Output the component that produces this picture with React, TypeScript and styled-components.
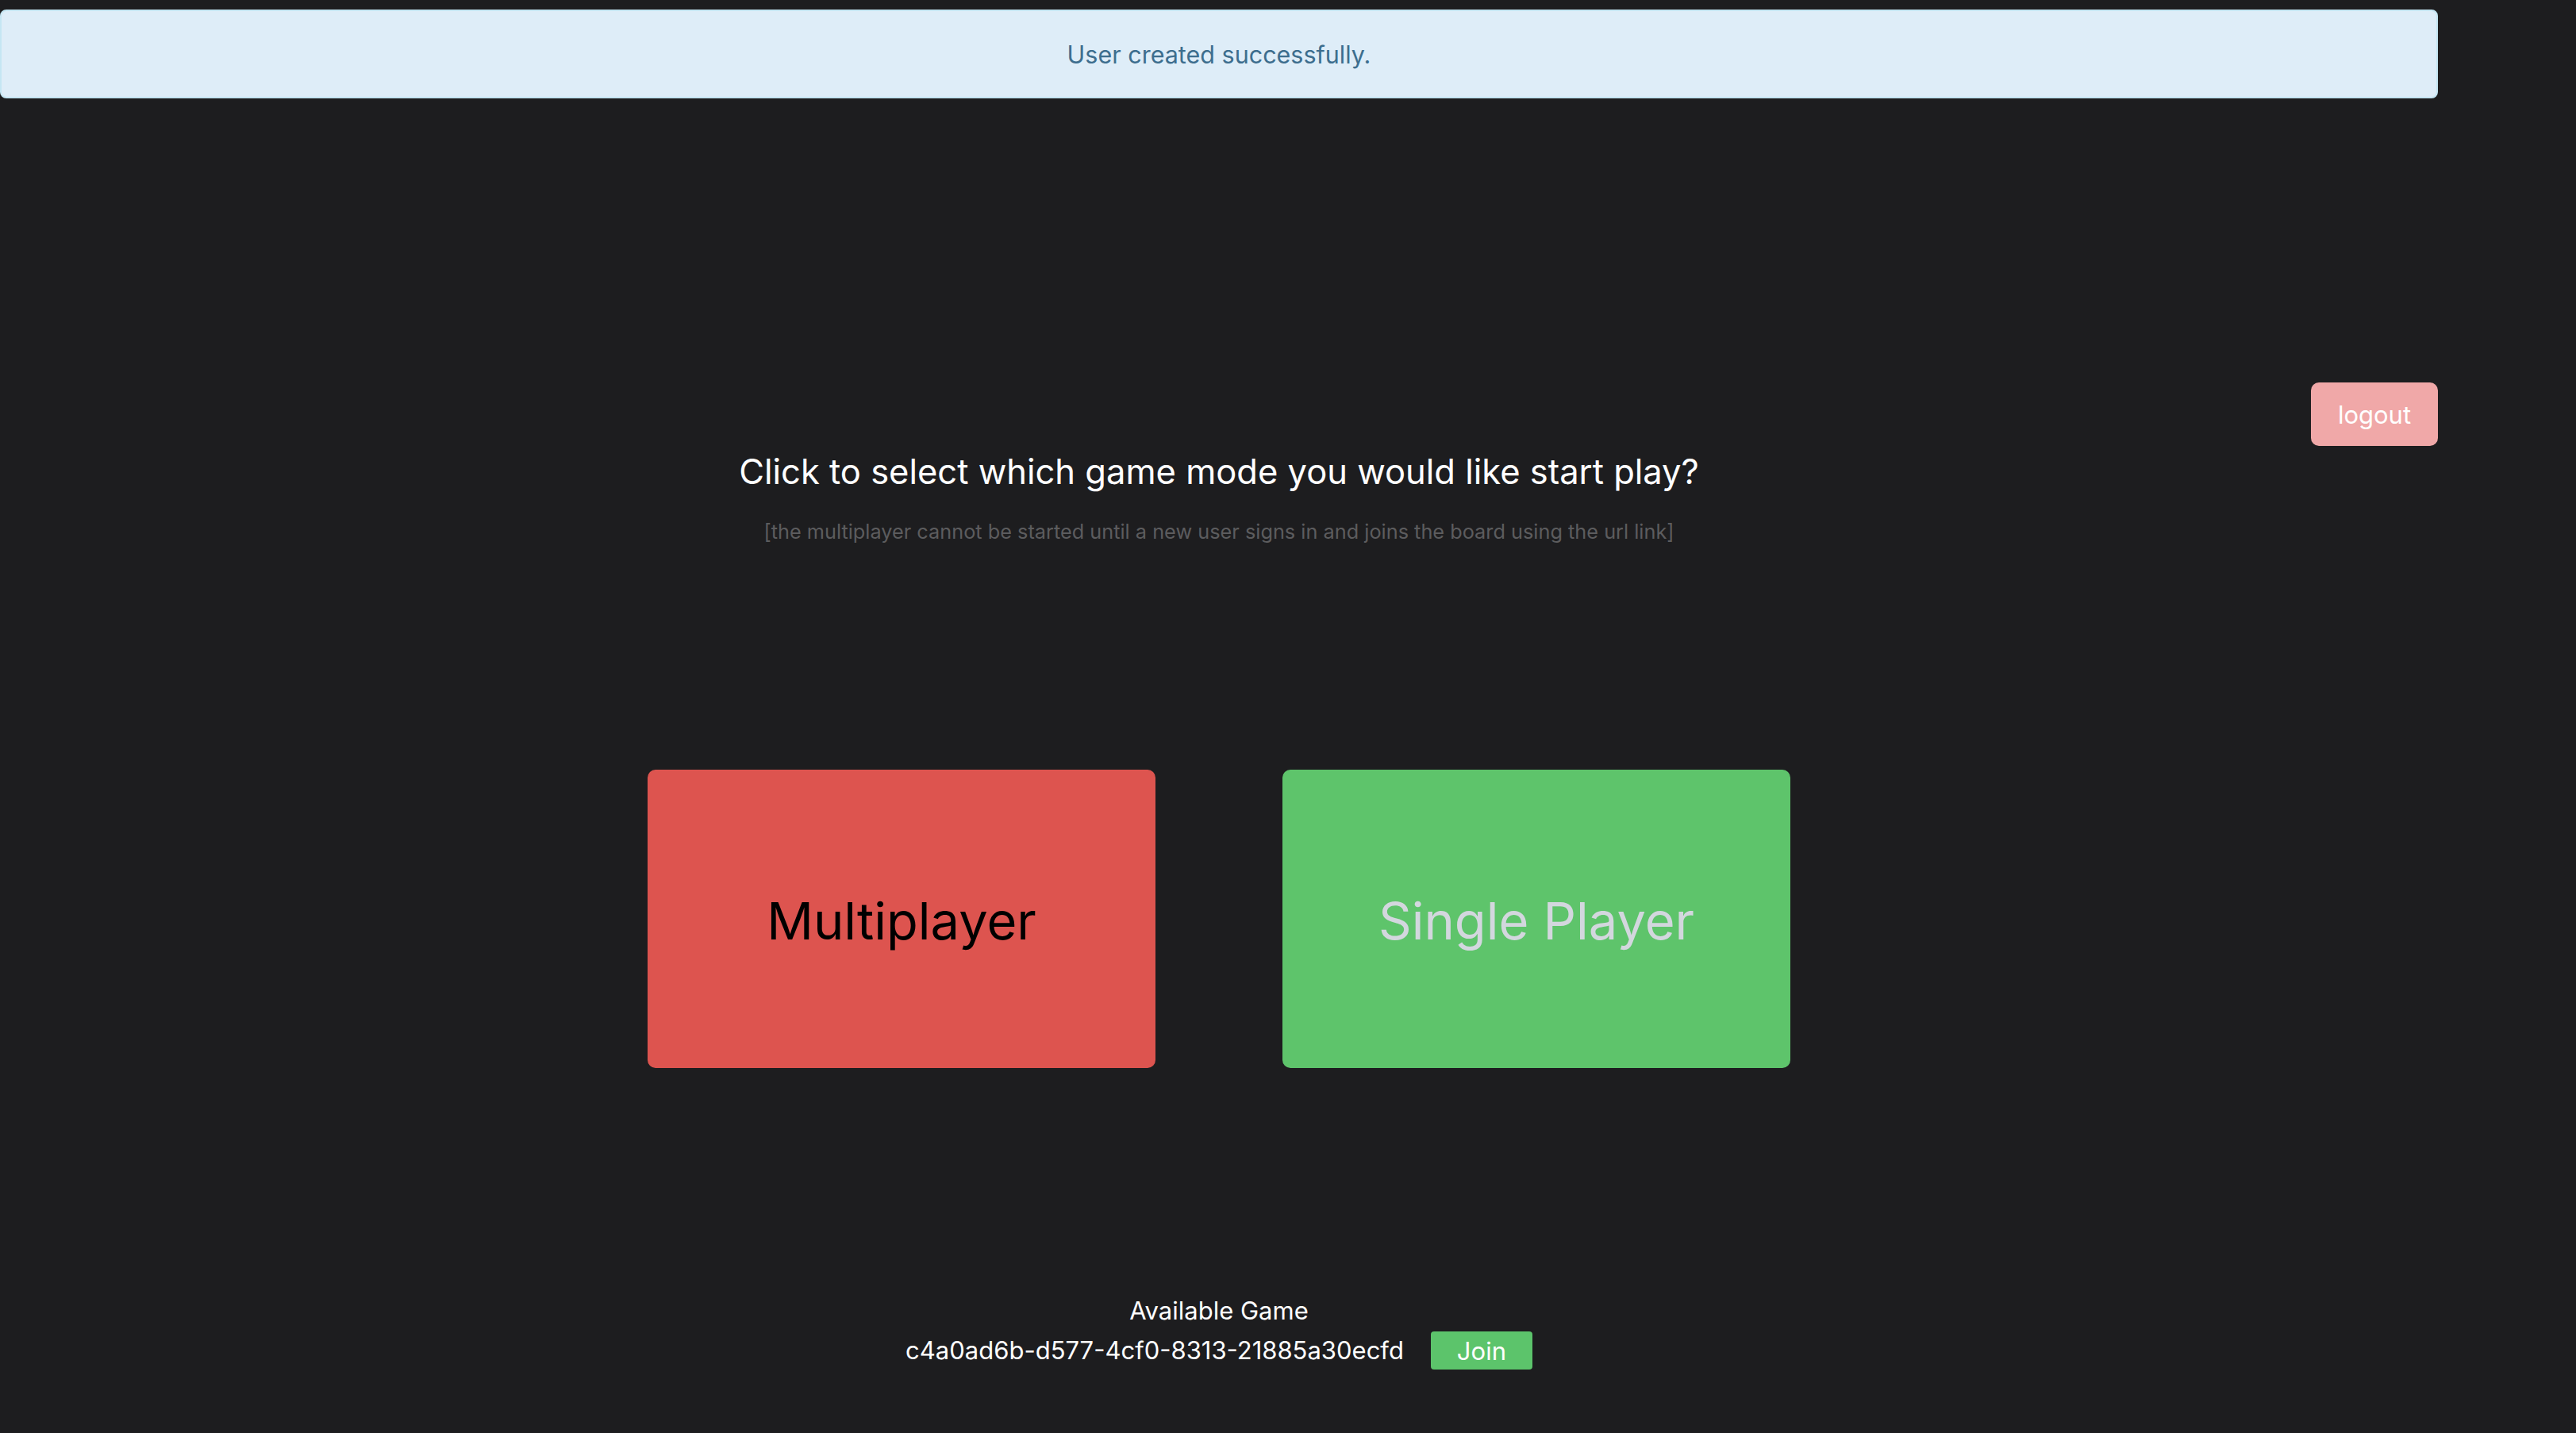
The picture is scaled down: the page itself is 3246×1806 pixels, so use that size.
import React from "react";
import styled, { createGlobalStyle } from "styled-components";

const GlobalStyle = createGlobalStyle`
  html, body {
    margin: 0;
    padding: 0;
    background: #1d1d1f;
    font-family: Inter, "Noto Sans", "Liberation Sans", sans-serif;
  }
  body { min-height: 1806px; }
`;

const Page = styled.div`
  width: 3072px;
  padding-top: 12px;
  display: flex;
  flex-direction: column;
  align-items: stretch;
`;

const Alert = styled.div`
  box-sizing: border-box;
  height: 112px;
  border: 2px solid #c5e6f3;
  border-radius: 8px;
  background: #deedf8;
  color: #3d6e8e;
  font-size: 30.5px;
  display: flex;
  align-items: center;
  justify-content: center;
`;

const TopBar = styled.div`
  display: flex;
  justify-content: flex-end;
  margin-top: 358px;
`;

const LogoutButton = styled.button`
  width: 160px;
  height: 80px;
  border: none;
  border-radius: 10px;
  background: #f0a8a8;
  color: #ffffff;
  font-family: inherit;
  font-size: 31px;
  cursor: pointer;
`;

const Heading = styled.h1`
  margin: 2px 0 0;
  text-align: center;
  font-size: 43.5px;
  font-weight: 400;
  line-height: 60px;
  color: #ffffff;
`;

const Note = styled.p`
  margin: 30px 0 0;
  text-align: center;
  font-size: 25.3px;
  line-height: 32px;
  color: #5c5c5e;
`;

const Modes = styled.div`
  display: flex;
  justify-content: center;
  gap: 160px;
  margin-top: 284px;
`;

const ModeCard = styled.button<{ $bg: string; $fg: string }>`
  width: 640px;
  height: 376px;
  border: none;
  border-radius: 10px;
  background: ${(p) => p.$bg};
  color: ${(p) => p.$fg};
  font-family: inherit;
  font-size: 65px;
  font-weight: 400;
  display: flex;
  align-items: center;
  justify-content: center;
  padding-top: 6px;
  cursor: pointer;
`;

const Available = styled.div`
  margin-top: 286px;
  display: flex;
  flex-direction: column;
  align-items: center;
  color: #ffffff;
  font-size: 31px;
`;

const AvailableTitle = styled.div`
  line-height: 40px;
`;

const GameRow = styled.div`
  display: flex;
  align-items: center;
  gap: 34px;
  margin-top: 6px;
`;

const GameId = styled.span`
  line-height: 48px;
`;

const JoinButton = styled.button`
  width: 128px;
  height: 48px;
  border: none;
  border-radius: 4px;
  background: #5cc46b;
  color: #ffffff;
  font-family: inherit;
  font-size: 31px;
  cursor: pointer;
`;

export default function App() {
  return (
    <>
      <GlobalStyle />
      <Page>
        <Alert>User created successfully.</Alert>
        <TopBar>
          <LogoutButton>logout</LogoutButton>
        </TopBar>
        <Heading>Click to select which game mode you would like start play?</Heading>
        <Note>
          [the multiplayer cannot be started until a new user signs in and joins the board using the url link]
        </Note>
        <Modes>
          <ModeCard $bg="#dd544f" $fg="#000000">Multiplayer</ModeCard>
          <ModeCard $bg="#5ec46b" $fg="#d3d7de">Single Player</ModeCard>
        </Modes>
        <Available>
          <AvailableTitle>Available Game</AvailableTitle>
          <GameRow>
            <GameId>c4a0ad6b-d577-4cf0-8313-21885a30ecfd</GameId>
            <JoinButton>Join</JoinButton>
          </GameRow>
        </Available>
      </Page>
    </>
  );
}
